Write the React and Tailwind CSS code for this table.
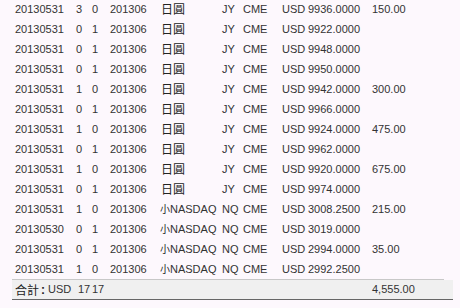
import React from "react";

const rows = [
  ["20130531", "3", "0", "日圓", "JY", "9936.0000", "150.00"],
  ["20130531", "0", "1", "日圓", "JY", "9922.0000", ""],
  ["20130531", "0", "1", "日圓", "JY", "9948.0000", ""],
  ["20130531", "0", "1", "日圓", "JY", "9950.0000", ""],
  ["20130531", "1", "0", "日圓", "JY", "9942.0000", "300.00"],
  ["20130531", "0", "1", "日圓", "JY", "9966.0000", ""],
  ["20130531", "1", "0", "日圓", "JY", "9924.0000", "475.00"],
  ["20130531", "0", "1", "日圓", "JY", "9962.0000", ""],
  ["20130531", "1", "0", "日圓", "JY", "9920.0000", "675.00"],
  ["20130531", "0", "1", "日圓", "JY", "9974.0000", ""],
  ["20130531", "1", "0", "小NASDAQ", "NQ", "3008.2500", "215.00"],
  ["20130530", "0", "1", "小NASDAQ", "NQ", "3019.0000", ""],
  ["20130531", "0", "1", "小NASDAQ", "NQ", "2994.0000", "35.00"],
  ["20130531", "1", "0", "小NASDAQ", "NQ", "2992.2500", ""],
];

const latin = "font-['Liberation_Sans','Noto_Sans_CJK_TC',sans-serif]";

export default function App() {
  return (
    <div className={`w-[460px] h-[308px] bg-[#fdf8fd] text-[#333] text-[11px] ${latin} overflow-hidden`}>
      <div className="ml-[12px] w-[432px] -mt-px border-b border-[#c8c8c8]">
        {rows.map((r, i) => (
          <div
            key={i}
            className="grid grid-cols-[61px_16px_18px_50px_62px_21px_39px_26px_64px_1fr] h-[20px] items-center pl-[3px] whitespace-nowrap"
          >
            <span>{r[0]}</span>
            <span>{r[1]}</span>
            <span>{r[2]}</span>
            <span>201306</span>
            <span>
              {r[3] === "日圓" ? (
                <span className="ml-px font-['Noto_Sans_CJK_TC',sans-serif] text-[12px] text-[#222]">日圓</span>
              ) : (
                <>
                  <span className="font-['Noto_Sans_CJK_TC',sans-serif] text-[10px] text-[#222]">小</span>
                  NASDAQ
                </>
              )}
            </span>
            <span>{r[4]}</span>
            <span>CME</span>
            <span>USD</span>
            <span>{r[5]}</span>
            <span>{r[6]}</span>
          </div>
        ))}
      </div>
      <div className="ml-[12px] w-[441px] h-[20px] bg-[#f0f0f0] border-b border-[#666] flex items-center pl-[3px] whitespace-nowrap">
        <span className="w-[24px] font-['Noto_Sans_CJK_TC',sans-serif] text-[12px] text-[#222]">合計</span>
        <span className="w-[9px] text-[12px] font-bold text-[#222] pl-[2px]">:</span>
        <span className="w-[30px]">USD</span>
        <span className="w-[14px]">17</span>
        <span className="w-[280px]">17</span>
        <span>4,555.00</span>
      </div>
    </div>
  );
}
